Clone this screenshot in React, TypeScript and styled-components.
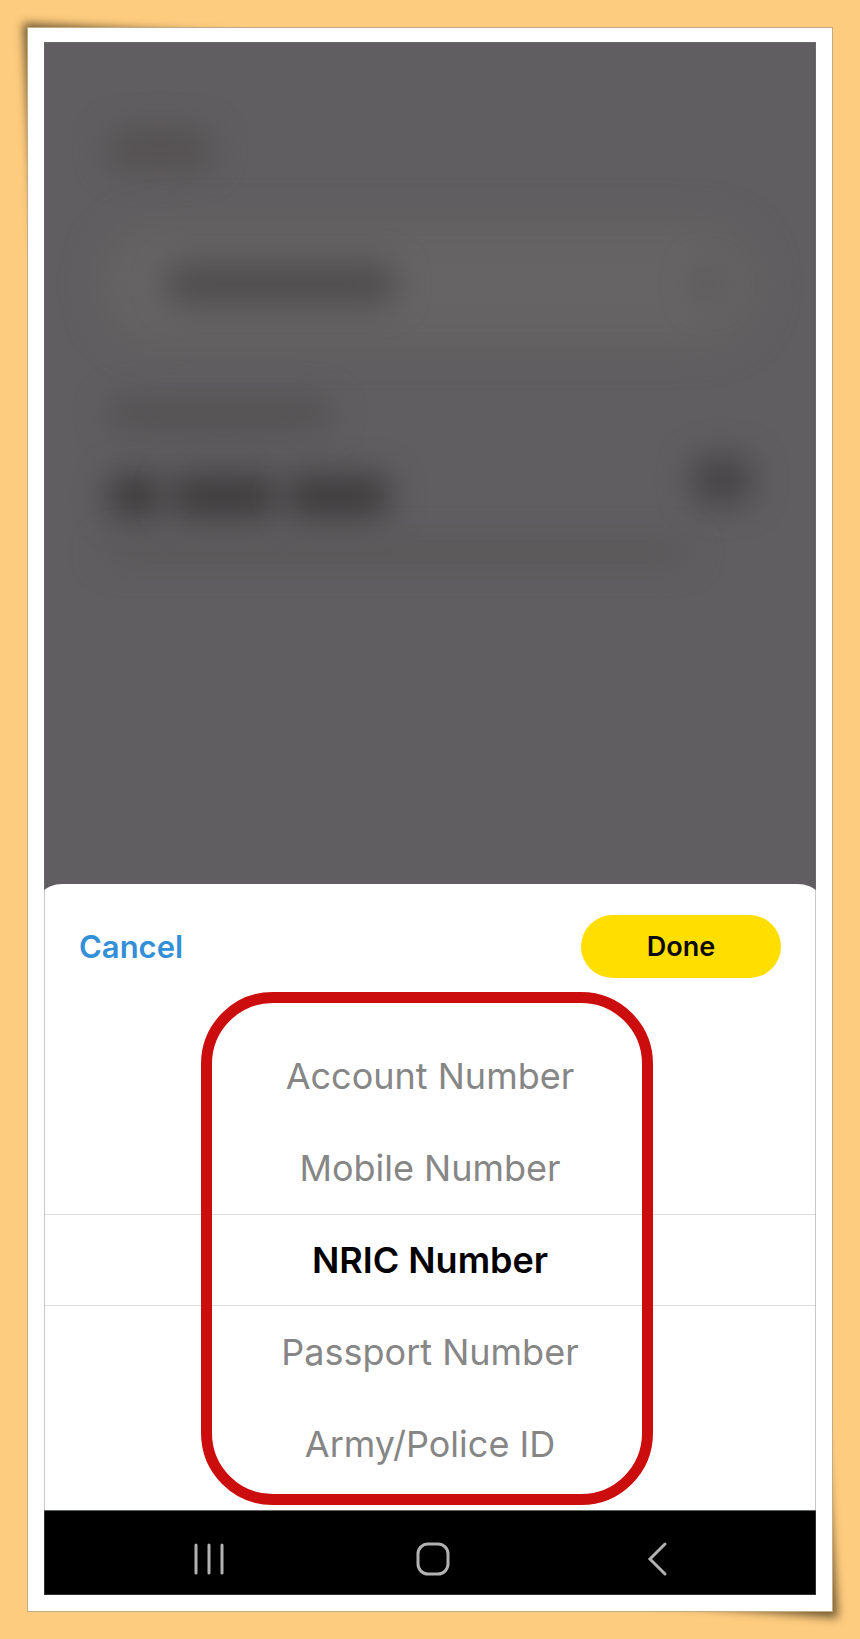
import React, { useState } from 'react';
import styled, { createGlobalStyle } from 'styled-components';

const GlobalStyle = createGlobalStyle`
  *, *::before, *::after { box-sizing: border-box; }
  body {
    margin: 0;
    background: #fecc7f;
    font-family: Inter, "Open Sans", sans-serif;
  }
  button { font-family: inherit; cursor: pointer; }
`;

const Page = styled.main`
  display: flex;
  min-height: 100vh;
  padding: 27px;
  overflow: hidden;
`;

const Photo = styled.div`
  position: relative;
  isolation: isolate;
  display: flex;
  flex: 1;
  min-width: 0;
`;

const Mat = styled.div`
  display: flex;
  flex: 1;
  min-width: 0;
  padding: 14px 16px 16px;
  border: 1px solid #c3ab84;
  background: #fff;
`;

const CornerShadow = styled.div<{ $corner: 'top' | 'bottom' }>`
  position: absolute;
  z-index: -1;
  width: 220px;
  height: 230px;
  filter: blur(5px);
  ${(p) => (p.$corner === 'top' ? 'top: -4px; left: -4px;' : 'right: -5px; bottom: -6px;')}

  &::before {
    content: '';
    display: block;
    height: 100%;
    background: rgba(50, 40, 20, 0.7);
    clip-path: ${(p) =>
      p.$corner === 'top'
        ? 'polygon(0 0, 100% 12px, 100% 100%, 12px 100%)'
        : 'polygon(100% 100%, 0 calc(100% - 18px), 0 0, calc(100% - 16px) 0)'};
  }
`;

const Screen = styled.div`
  position: relative;
  display: flex;
  flex: 1;
  flex-direction: column;
  min-width: 0;
  overflow: hidden;
  background: #605e60;

  &::after {
    content: '';
    position: absolute;
    inset: 0;
    border: 1px solid rgba(120, 120, 120, 0.4);
    pointer-events: none;
  }
`;

const Obscured = styled.div`
  display: flex;
  flex: 1;
  flex-direction: column;
  padding: 88px 60px 300px;
`;

const Smudge = styled.div<{ $w: string; $h: number; $tone: string }>`
  width: ${(p) => p.$w};
  height: ${(p) => p.$h}px;
  border-radius: 16px;
  background: ${(p) => p.$tone};
  filter: blur(16px);
`;

const FieldGlow = styled.div`
  position: relative;
  isolation: isolate;
  display: flex;
  align-items: center;
  justify-content: space-between;
  height: 116px;
  margin: 56px 0;
  padding: 0 36px 0 62px;

  &::before {
    content: '';
    position: absolute;
    z-index: -1;
    inset: 0;
    border-radius: 60px;
    background: #666464;
    filter: blur(20px);
  }
`;

const ValueRow = styled.div`
  display: flex;
  align-items: flex-start;
  justify-content: space-between;
  padding: 0 4px;
  margin: 26px 0;
`;

const Digits = styled.div`
  display: flex;
  gap: 8px;
  padding-top: 18px;
`;

const LabelRow = styled.div`
  padding: 0 4px;
`;

const Sheet = styled.section`
  margin: 0 -12px;
  padding: 31px 12px 20px;
  border-radius: 30px 30px 0 0;
  background: #fff;
`;

const SheetHeader = styled.header`
  display: flex;
  align-items: center;
  justify-content: space-between;
  padding: 0 35px;
`;

const CancelButton = styled.button`
  padding: 0;
  border: 0;
  background: none;
  color: #338fd8;
  font-size: 31px;
  font-weight: 600;
  line-height: 36px;
`;

const DoneButton = styled.button`
  width: 200px;
  height: 63px;
  border: 0;
  border-radius: 32px;
  background: #ffde00;
  color: #0a0a0a;
  font-size: 27px;
  font-weight: 600;
`;

const Picker = styled.fieldset`
  position: relative;
  min-width: 0;
  margin: 52px 0 0;
  padding: 0;
  border: 0;
`;

const Option = styled.label<{ $selected: boolean }>`
  display: flex;
  align-items: center;
  justify-content: center;
  height: 92px;
  border: solid ${(p) => (p.$selected ? '#dedede' : 'transparent')};
  border-width: 1px 0;
  color: ${(p) => (p.$selected ? '#000' : '#868686')};
  font-size: 36px;
  font-weight: ${(p) => (p.$selected ? 600 : 400)};
  line-height: 44px;
  cursor: pointer;
`;

const HiddenRadio = styled.input`
  position: absolute;
  opacity: 0;
  pointer-events: none;
`;

const Highlight = styled.div`
  position: absolute;
  inset: -38px 163px -15px 157px;
  border: 11px solid #cb0d0d;
  border-radius: 72px;
  pointer-events: none;
`;

const NavBar = styled.nav`
  display: flex;
  height: 85px;
  padding: 11px 47px 0 53px;
  border-top: 1px solid #5f6662;
  background: #000;
`;

const NavButton = styled.button`
  display: flex;
  flex: 1;
  align-items: center;
  justify-content: center;
  padding: 0;
  border: 0;
  background: none;
  color: #b2b2b2;
`;

const NavIcon = ({ children }: { children: React.ReactNode }) => (
  <svg width="40" height="40" viewBox="0 0 40 40" fill="none" stroke="currentColor" strokeWidth="3" strokeLinecap="round" aria-hidden="true">
    {children}
  </svg>
);

const OPTIONS = ['Account Number', 'Mobile Number', 'NRIC Number', 'Passport Number', 'Army/Police ID'];

export default function App() {
  const [selected, setSelected] = useState('NRIC Number');

  return (
    <>
      <GlobalStyle />
      <Page>
        <Photo>
          <CornerShadow $corner="top" />
          <CornerShadow $corner="bottom" />
          <Mat>
            <Screen>
              <Obscured aria-hidden="true">
                <LabelRow>
                  <Smudge $w="104px" $h={40} $tone="#545152" />
                </LabelRow>
                <FieldGlow>
                  <Smudge $w="230px" $h={40} $tone="#4e4c4d" />
                  <Smudge $w="24px" $h={40} $tone="#5b595a" />
                </FieldGlow>
                <LabelRow>
                  <Smudge $w="224px" $h={32} $tone="#535152" />
                </LabelRow>
                <ValueRow>
                  <Digits>
                    <Smudge $w="54px" $h={44} $tone="#3e3c3d" />
                    <Smudge $w="108px" $h={44} $tone="#3f3d3e" />
                    <Smudge $w="104px" $h={44} $tone="#3f3d3e" />
                  </Digits>
                  <Smudge $w="60px" $h={48} $tone="#464446" />
                </ValueRow>
                <Smudge $w="90%" $h={16} $tone="#575556" />
              </Obscured>
              <Sheet>
                <SheetHeader>
                  <CancelButton type="button">Cancel</CancelButton>
                  <DoneButton type="button">Done</DoneButton>
                </SheetHeader>
                <Picker aria-label="ID type">
                  {OPTIONS.map((name) => (
                    <Option key={name} $selected={name === selected}>
                      <HiddenRadio
                        type="radio"
                        name="id-type"
                        checked={name === selected}
                        onChange={() => setSelected(name)}
                      />
                      {name}
                    </Option>
                  ))}
                  <Highlight />
                </Picker>
              </Sheet>
              <NavBar>
                <NavButton type="button" aria-label="Recent apps">
                  <NavIcon>
                    <path d="M7 6v28M20 6v28M33 6v28" />
                  </NavIcon>
                </NavButton>
                <NavButton type="button" aria-label="Home">
                  <NavIcon>
                    <rect x="5" y="5" width="30" height="30" rx="10" />
                  </NavIcon>
                </NavButton>
                <NavButton type="button" aria-label="Back">
                  <NavIcon>
                    <path d="M28 5 13 20l15 15" />
                  </NavIcon>
                </NavButton>
              </NavBar>
            </Screen>
          </Mat>
        </Photo>
      </Page>
    </>
  );
}
